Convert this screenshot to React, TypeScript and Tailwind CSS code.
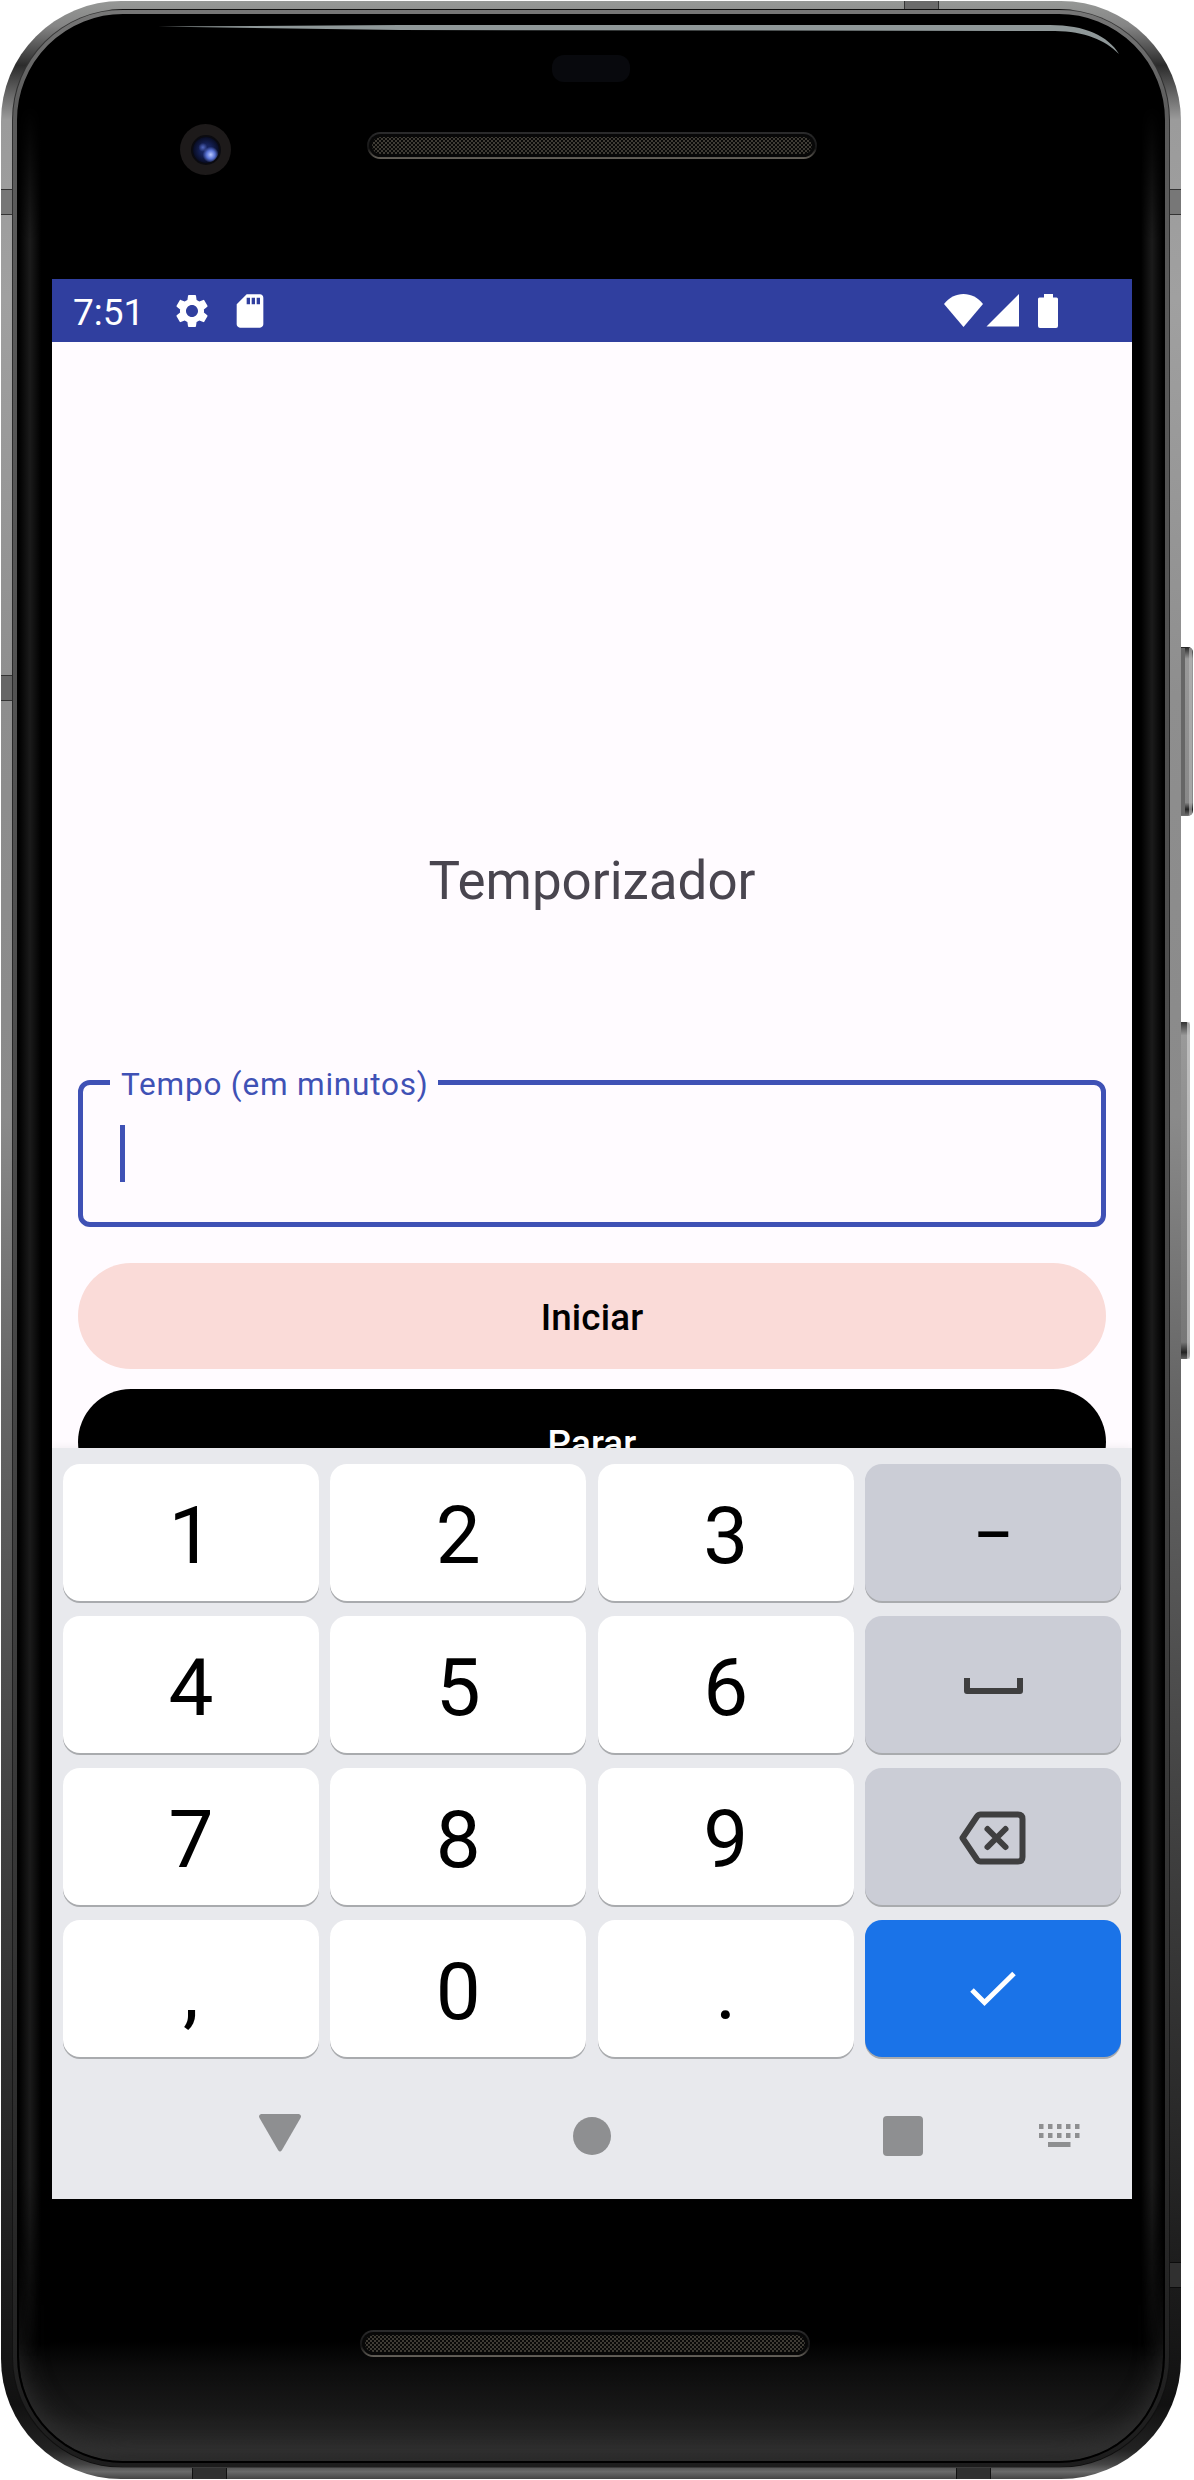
import React from 'react'
import { MdSettings, MdSdCard } from 'react-icons/md'

const keyBase =
  'flex h-[137px] flex-1 items-center justify-center rounded-[17px] shadow-[0_2px_0_#a9abae]'

function NumberKey({ label }: { label: string }) {
  return (
    <button className={`${keyBase} bg-white pt-[6px] text-[80px] leading-none text-black`}>{label}</button>
  )
}

function ActionKey({ children, primary }: { children: React.ReactNode; primary?: boolean }) {
  return <button className={`${keyBase} ${primary ? 'bg-[#1a73e8]' : 'bg-[#cbcdd6]'}`}>{children}</button>
}

function KeyRow({ labels, children }: { labels: string[]; children: React.ReactNode }) {
  return (
    <div className="flex gap-[11.5px]">
      {labels.map((l) => (
        <NumberKey key={l} label={l} />
      ))}
      {children}
    </div>
  )
}

function StatusBar() {
  return (
    <div className="flex h-[63px] items-center bg-[#303f9f] pl-[21px] text-white">
      <span className="w-[84px] pt-[4px] text-[37px] leading-none">7:51</span>
      <div className="ml-[15px] flex items-center gap-[18px]">
        <MdSettings size={40} />
        <MdSdCard size={40} />
      </div>
      <svg className="mr-[74px] ml-auto" width="114" height="34" viewBox="0 0 114 34" fill="currentColor">
        <path d="M0 10C5 3.500 12 0 19.500 0S34 3.500 39 10L19.500 33Z" />
        <path d="M42.500 32.500L75 0V32.500Z" />
        <path d="M100 0H109V3.500H112.500Q114 3.500 114 5V32Q114 34 112 34H96Q94 34 94 32V5Q94 3.500 95.500 3.500H100Z" />
      </svg>
    </div>
  )
}

function TimeField() {
  return (
    <div className="relative mx-[26px] mt-[169px] flex h-[147px] items-start rounded-[12px] border-[5px] border-[#3f51b5]">
      <div className="absolute top-[-18px] left-[27px] w-[328px] bg-[#fffbff] pl-[11px] text-[31.5px] leading-[36px] tracking-[0.8px] whitespace-nowrap text-[#3f51b5]">
        Tempo (em minutos)
      </div>
      <div className="mt-[40px] ml-[37px] h-[57px] w-[5px] bg-[#3f51b5]" />
    </div>
  )
}

function NavBar() {
  return (
    <div className="mt-[49px] flex h-[60px] items-center pl-[207px] text-[#8e8f91]">
      <svg className="-mt-[6px]" width="42" height="38" viewBox="0 0 42 38" fill="currentColor">
        <path d="M2 0H40Q43 1 41.500 4L23 36Q21 39 19 36L.5 4Q-1 1 2 0Z" />
      </svg>
      <div className="ml-[272px] size-[38px] rounded-full bg-current" />
      <div className="ml-[272px] size-[40px] rounded-[4px] bg-current" />
      <svg className="ml-[116px]" width="41" height="24" viewBox="0 0 41 24" fill="currentColor">
        {[0, 1, 2, 3, 4].map((i) => (
          <g key={i}>
            <rect x={i * 9} y="0" width="4.500" height="5" />
            <rect x={i * 9} y="9" width="4.500" height="5" />
          </g>
        ))}
        <rect x="9" y="18" width="22.500" height="5" />
      </svg>
    </div>
  )
}

function Keyboard() {
  return (
    <div className="absolute inset-x-0 top-[1169px] h-[751px] bg-[#e8e9ed] pt-[16px] shadow-[0_-2px_8px_rgba(0,0,0,0.05)]">
      <div className="flex flex-col gap-[15px] px-[11px]">
        <KeyRow labels={['1', '2', '3']}>
          <ActionKey>
            <span className="pt-[5px] text-[60px] leading-none font-medium">–</span>
          </ActionKey>
        </KeyRow>
        <KeyRow labels={['4', '5', '6']}>
          <ActionKey>
            <svg className="mt-[2px]" width="59" height="16" viewBox="0 0 59 16" fill="none" stroke="#3f3f40" strokeWidth="6">
              <path d="M3 0V13H56V0" strokeLinejoin="round" />
            </svg>
          </ActionKey>
        </KeyRow>
        <KeyRow labels={['7', '8', '9']}>
          <ActionKey>
            <svg className="mt-[3px] mr-[2px]" width="67" height="54" viewBox="0 0 67 54" fill="none" stroke="#3f3f40" strokeWidth="6" strokeLinejoin="round" strokeLinecap="round">
              <path d="M3.500 27L18 5.500Q19.500 3.500 21.500 3.500H59Q63.500 3.500 63.500 8V46Q63.500 50.500 59 50.500H21.500Q19.500 50.500 18 48.500Z" />
              <path d="M28.500 18L46.500 36M46.500 18L28.500 36" />
            </svg>
          </ActionKey>
        </KeyRow>
        <KeyRow labels={[',', '0', '.']}>
          <ActionKey primary>
            <svg className="mt-[1px]" width="46" height="36" viewBox="0 0 46 36" fill="none" stroke="#fff" strokeWidth="5">
              <path d="M2 19L14.500 31.500L44 2.500" />
            </svg>
          </ActionKey>
        </KeyRow>
      </div>
      <NavBar />
    </div>
  )
}

function Screen() {
  return (
    <div className="relative ml-[52px] h-[1920px] w-[1080px] overflow-hidden bg-[#fffbff]">
      <StatusBar />
      <h1 className="mt-[509px] text-center text-[52.9px] leading-[60px] text-[#49454f]">Temporizador</h1>
      <TimeField />
      <div className="mx-[26px] mt-[36px] flex flex-col gap-[20px] text-[36.75px] font-medium">
        <button className="h-[106px] rounded-full bg-[#fadbd8] pt-[4px] tracking-[0.15px] text-black">Iniciar</button>
        <button className="h-[106px] rounded-full bg-black pt-[4px] tracking-[0.15px] text-white">Parar</button>
      </div>
      <Keyboard />
    </div>
  )
}

const mesh =
  'bg-[#090908] bg-[radial-gradient(circle,#4a463f_0.6px,transparent_1.2px),radial-gradient(circle,#4a463f_0.6px,transparent_1.2px)] bg-[length:4px_4px] bg-[position:0_0,2px_2px]'

function Speaker() {
  return (
    <div className="h-[27px] w-[450px] rounded-full bg-[linear-gradient(#2b2b2c,#151515_60%,#66625b)] p-[2px]">
      <div className="h-full rounded-full bg-[#080808] p-[3px]">
        <div className={`h-full rounded-full ${mesh}`} />
      </div>
    </div>
  )
}

function Camera() {
  return (
    <div className="flex size-[51px] items-center justify-center rounded-full bg-[#1d1a1a]">
      <div className="size-[30px] rounded-full border-2 border-[#0b0b10] bg-[radial-gradient(circle_at_68%_68%,#b9c8ff_0,#5a73d4_17%,transparent_32%),radial-gradient(circle_at_38%_40%,#5267bd_0,transparent_20%),radial-gradient(circle,#16235c_30%,#070a1c_75%)]" />
    </div>
  )
}

/* Metal rim, black glass and the light that falls on them. */
function Chassis() {
  return (
    <>
      <div className="absolute top-[647px] left-[1180px] h-[169px] w-[13px] rounded-r-[5px] bg-[linear-gradient(#222,#999_7%,#888_92%,#222_96%,#777)] p-[1px]">
        <div className="h-full border-r-[3px] border-l-4 border-r-[#bbb]/60 border-l-[#666]" />
      </div>
      <div className="absolute top-[1022px] left-[1180px] h-[337px] w-[10px] rounded-r-[4px] bg-[linear-gradient(#333,#999_4%,#777_95%,#222_98%,#666)]">
        <div className="h-full border-r-[3px] border-r-[#ccc]/70" />
      </div>
      <div className="absolute top-[1px] left-[1px] h-[2478px] w-[1180px] overflow-hidden rounded-[120px] bg-[linear-gradient(#969896_0,#858585_1%,#2c2c2c_2.600%,#9b9b9b_4.800%,#a0a0a0_12%,#8e8e8e_28%,#8a8a8a_45%,#666_56%,#444_72%,#242424_88%,#111_97%,#222_98.800%,#444_99.400%,#6a6a6a_99.700%,#444)]">
        <div className="absolute top-[188px] left-0 flex h-[26px] w-full border-y border-[#333] bg-[#777]" />
        <div className="absolute top-[674px] left-0 h-[26px] w-[40px] border-y border-[#333] bg-[#666]" />
        <div className="absolute top-[2261px] right-0 h-[26px] w-[40px] border-y border-[#0c0c0c] bg-[#303030]" />
        <div className="absolute top-0 left-[903px] h-[40px] w-[35px] border-x border-[#333] bg-[#6b6b6b]" />
        <div className="absolute bottom-0 left-[191px] h-[40px] w-[35px] border-x border-[#111] bg-[#303030]" />
        <div className="absolute bottom-0 left-[955px] h-[40px] w-[35px] border-x border-[#111] bg-[#303030]" />
        <div className="absolute top-[8px] right-[11px] bottom-[11px] left-[11px] rounded-[111px] border border-black/50 bg-[linear-gradient(#777,#5c5c5c_4%,#4a4a4a_50%,#333_80%,#1d1d1d)]" />
        <div className="absolute top-[13px] right-[16px] bottom-[16px] left-[16px] overflow-hidden rounded-[106px] border-2 border-black bg-black">
          <div className="absolute inset-x-0 bottom-0 h-[120px] bg-[linear-gradient(#000,#0c0c0c_22%,#191919_60%,#2e2e2e_92%,#222)]" />
          <div className="absolute inset-x-0 bottom-0 h-[240px] rounded-b-[104px] shadow-[inset_0_-6px_26px_#303030] [mask-image:linear-gradient(transparent,#000_70%)]" />
          <div className="absolute top-[90px] left-0 h-[2250px] w-[22px] bg-[linear-gradient(90deg,#000,#080808_15%,#1b1b1b_50%,#000)] [mask-image:linear-gradient(transparent,#000_6%,#000_92%,transparent)]" />
          <div className="absolute top-[90px] right-0 h-[2250px] w-[22px] bg-[linear-gradient(90deg,#000,#1b1b1b_50%,#080808_85%,#000)] [mask-image:linear-gradient(transparent,#000_6%,#000_92%,transparent)]" />
        </div>
      </div>
      <svg className="absolute top-0 left-0" width="1194" height="70" viewBox="0 0 1194 70">
        <path d="M158 26.500L400 25H1050C1085 25 1108 36 1119 54C1105 40 1085 31.500 1055 31L400 30Z" fill="#8f9899" />
      </svg>
    </>
  )
}

export default function App() {
  return (
    <div className="relative h-[2480px] w-[1194px] overflow-hidden bg-white font-['Roboto',sans-serif]">
      <Chassis />
      <div className="relative flex h-full flex-col">
        <div className="flex h-[279px] flex-col">
          <div className="mt-[55px] ml-[552px] h-[27px] w-[78px] rounded-[12px] bg-[#08090d]" />
          <div className="mt-[42px] ml-[180px] flex items-center gap-[136px]">
            <Camera />
            <div className="-mt-[9px]">
              <Speaker />
            </div>
          </div>
        </div>
        <Screen />
        <div className="mt-[131px] ml-[360px]">
          <Speaker />
        </div>
      </div>
    </div>
  )
}
